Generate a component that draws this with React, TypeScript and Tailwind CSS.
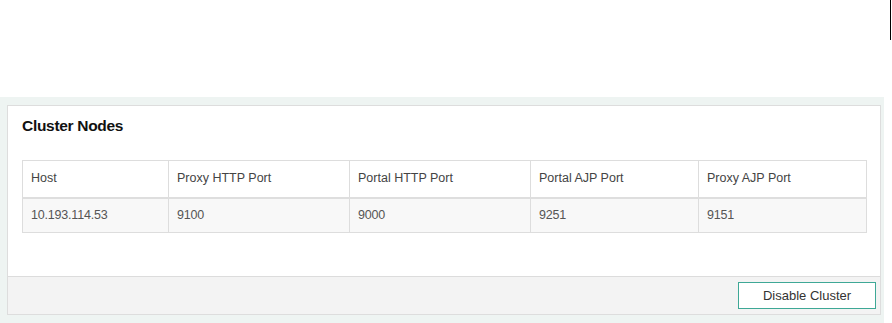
const columns = ['Host', 'Proxy HTTP Port', 'Portal HTTP Port', 'Portal AJP Port', 'Proxy AJP Port'];
const widths = ['w-[146px]', 'w-[181px]', 'w-[181px]', 'w-[168px]', 'w-[168px]'];
const rows = [['10.193.114.53', '9100', '9000', '9251', '9151']];

export default function App() {
  return (
    <div className="relative w-[892px] h-[323px] bg-white overflow-hidden font-['Liberation_Sans',Arial,sans-serif] text-[#333]">
      {/* stray caret at the top right edge */}
      <div className="absolute right-[1px] top-0 h-[40px] w-[1px] bg-black" />
      <div className="h-[97px]" />
      <section className="w-[884px] bg-[#eef4f2] pt-[8px] pl-[7px] pr-[3px] pb-[8px]">
        <div className="border border-[#dddddd] bg-white">
          <div className="px-[14px] pt-[9px] pb-[43px]">
            <h2 className="text-[15.5px] font-bold leading-[22px] text-[#111] tracking-[-0.3px]">Cluster Nodes</h2>
            <table className="mt-[23px] border-collapse text-[12.5px] text-[#444] w-[844px] table-fixed">
              <thead>
                <tr>
                  {columns.map((c, i) => (
                    <th
                      key={c}
                      className={`${widths[i]} h-[37px] border border-[#dddddd] border-b-2 border-b-[#dedede] px-[8px] text-left font-normal`}
                    >
                      {c}
                    </th>
                  ))}
                </tr>
              </thead>
              <tbody>
                {rows.map((r) => (
                  <tr key={r[0]} className="bg-[#f8f8f8]">
                    {r.map((v, i) => (
                      <td key={i} className="h-[35px] border border-[#dddddd] px-[8px] text-[#555] tracking-[-0.2px]">
                        {v}
                      </td>
                    ))}
                  </tr>
                ))}
              </tbody>
            </table>
          </div>
          <div className="flex justify-end border-t border-[#dcdcdc] bg-[#f3f3f3] pt-[5px] pb-[5px] pr-[4px]">
            <button className="h-[27px] w-[138px] border border-[#3ea896] bg-white text-[13px] text-[#333]">
              Disable Cluster
            </button>
          </div>
        </div>
      </section>
    </div>
  );
}
